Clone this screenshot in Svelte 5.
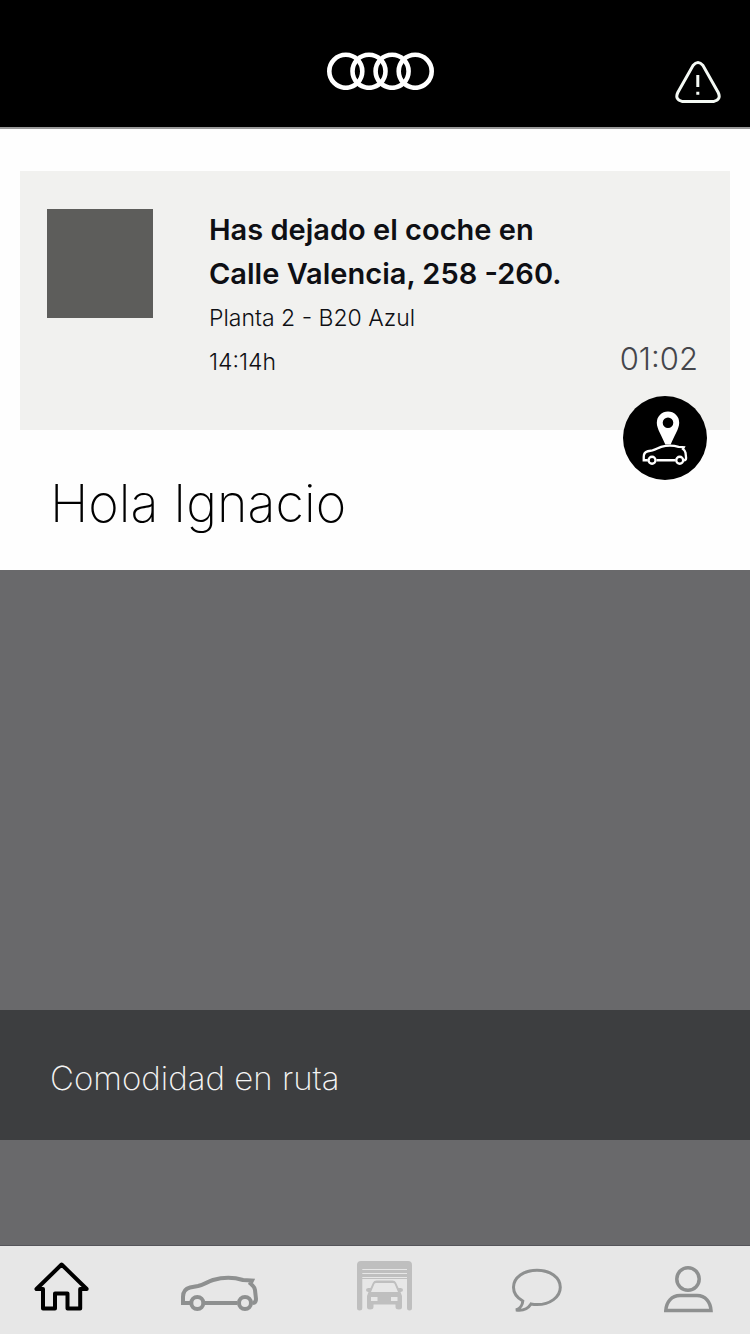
<script lang="ts">
	interface Tab {
		id: string;
		label: string;
		width: number;
		height: number;
	}

	const tabs: Tab[] = [
		{ id: 'home', label: 'Inicio', width: 56, height: 52 },
		{ id: 'car', label: 'Coche', width: 78, height: 38 },
		{ id: 'garage', label: 'Garaje', width: 56, height: 52 },
		{ id: 'chat', label: 'Mensajes', width: 52, height: 45 },
		{ id: 'profile', label: 'Perfil', width: 50, height: 47 }
	];

	let active = $state('home');
</script>

{#snippet car()}
	<path
		d="M10 28H3V22C3 16.500 6 13.500 10 12.500L18 11C24 9.500 27 7 33 5C44 1.800 54 2.200 63 5L72 5.500L70.500 8.500C73 10.500 74.500 12 75 15L76 24C76 26.500 75 28 72.500 28M25 28H57.500"
	/>
	<circle cx="17.300" cy="28" r="6" />
	<circle cx="65" cy="28" r="6" />
{/snippet}

<div class="screen">
	<header>
		<svg class="rings" width="107" height="38" viewBox="0 0 107 38" role="img" aria-label="Audi">
			{#each [18.8, 42, 65.1, 88.2] as cx}
				<circle {cx} cy="19.300" r="16.500" />
			{/each}
		</svg>
		<button class="alert" aria-label="Avisos">
			<svg width="46" height="42" viewBox="0 0 46 42">
				<path
					d="M18 4.500Q23 -1.500 28 4.500L43.200 31.500Q46.500 38.500 39 40.400H7Q-0.500 38.500 2.800 31.500Z"
				/>
				<path d="M22.800 14V26M22.800 30.700V33.700" />
			</svg>
		</button>
	</header>

	<main>
		<section class="card">
			<div class="thumb"></div>
			<div class="info">
				<h2>Has dejado el coche en<br />Calle Valencia, 258 -260.</h2>
				<p class="place">Planta 2 - B20 Azul</p>
				<div class="times">
					<span>14:14h</span>
					<span class="elapsed">01:02</span>
				</div>
			</div>
			<button class="locate" aria-label="Localizar el coche">
				<svg width="84" height="84" viewBox="0 0 84 84">
					<path
						class="pin"
						fill-rule="evenodd"
						d="M45 15.500A11.200 11.200 0 0 0 33.800 26.700C33.800 33 39 40 42.300 48.500H47.700C51 40 56.200 33 56.200 26.700A11.200 11.200 0 0 0 45 15.500ZM45 21.400A5.300 5.300 0 1 1 45 32A5.300 5.300 0 1 1 45 21.400Z"
					/>
					<g transform="translate(19 48) scale(0.580)">{@render car()}</g>
				</svg>
			</button>
		</section>

		<h1>Hola Ignacio</h1>

		<section class="hero"></section>
		<a class="band" href="#comodidad">Comodidad en ruta</a>
		<section class="preview"></section>
	</main>

	<nav>
		{#each tabs as tab}
			<button
				class={['tab', tab.id, active === tab.id && 'active']}
				aria-label={tab.label}
				onclick={() => (active = tab.id)}
			>
				<svg width={tab.width} height={tab.height} viewBox="0 0 {tab.width} {tab.height}">
					{#if tab.id === 'home'}
						<path
							d="M27.600 3.500L2.500 28H9V47.500H21V32.500H33.500V47.500H46.200V28H52.700Z"
						/>
					{:else if tab.id === 'car'}
						{@render car()}
					{:else if tab.id === 'garage'}
						<path
							class="solid"
							d="M1 4Q1 0 5 0H52Q56 0 56 4V47Q56 49.500 53.500 49.500Q51 49.500 51 47V18H6.300V47Q6.300 49.500 3.600 49.500Q1 49.500 1 47Z"
						/>
						<path class="slat" d="M6.300 8.500H51M6.300 12.500H51M6.300 16.500H51" />
						<path
							class="solid"
							fill-rule="evenodd"
							d="M14.500 27L17 21.500Q18 19.500 20.500 19.500H36.500Q39 19.500 40 21.500L42.500 27H44.500Q47 27 47 29Q47 31 44.500 31L46 35V46Q46 48.500 43 48.500Q39.500 48.500 39.500 46V43.500H17.500V46Q17.500 48.500 14 48.500Q11 48.500 11 46V35L12.500 31Q10 31 10 29Q10 27 12.500 27ZM15 31H42L38.500 22.800Q38 22 37 22H20Q19 22 18.500 22.800ZM15 36V40H21.500V36ZM35 36V40H41.500V36Z"
						/>
					{:else if tab.id === 'chat'}
						<path
							d="M11.800 33C5.500 29.500 2.500 25 2.500 19.300C2.500 9.500 13 2.200 26 2.200S49.300 9.500 49.300 19.300S39 36.600 26 36.600Q23 36.600 20 36C16.500 41.500 12 43 5 42C9 40.500 11.500 37.500 11.800 33Z"
						/>
					{:else}
						<circle cx="24" cy="13" r="11.200" />
						<path d="M1.800 44.500H47C46.500 36 41.500 29.500 33 29.500H16C7.500 29.500 2.300 36 1.800 44.500Z" />
					{/if}
				</svg>
			</button>
		{/each}
	</nav>
</div>

<style>
	:global(body) {
		margin: 0;
		background: #fefefe;
	}

	.screen {
		display: flex;
		flex-direction: column;
		min-height: 100vh;
		font-family: Inter, Roboto, sans-serif;
		color: #0e0f14;
	}

	button {
		padding: 0;
		border: none;
		background: none;
		cursor: pointer;
	}

	svg {
		display: block;
		fill: none;
		stroke: currentColor;
	}

	header {
		display: grid;
		grid-template-columns: 1fr auto 1fr;
		align-items: end;
		height: 127px;
		padding: 0 29px 0 40px;
		box-sizing: border-box;
		background: #000;
		color: #fff;
		box-shadow: 0 2px 0 #9a9a9a;
	}

	.rings {
		grid-column: 2;
		margin-bottom: 37px;
		stroke-width: 4.6;
	}

	.alert {
		justify-self: end;
		margin-bottom: 24px;
		color: #f5faf5;
		stroke-width: 3;
	}

	main {
		flex: 1;
		display: flex;
		flex-direction: column;
	}

	.card {
		position: relative;
		display: flex;
		gap: 56px;
		min-height: 259px;
		margin: 44px 20px 0;
		padding: 37px 32px 40px 27px;
		box-sizing: border-box;
		background: #f1f1ef;
	}

	.thumb {
		flex-shrink: 0;
		width: 106px;
		height: 109px;
		margin-top: 1px;
		background: #5d5d5b;
	}

	.info {
		flex: 1;
		white-space: nowrap;
	}

	h2,
	p {
		margin: 0;
		line-height: 44px;
	}

	h2 {
		font-size: 29px;
		font-weight: 600;
	}

	.place {
		font-size: 23px;
		font-weight: 300;
	}

	.times {
		display: flex;
		justify-content: space-between;
		align-items: baseline;
		font-size: 23px;
		font-weight: 300;
		line-height: 44px;
	}

	.elapsed {
		font-size: 31px;
		line-height: 36px;
		color: #45464b;
	}

	.locate {
		position: absolute;
		right: 23px;
		bottom: -50px;
		border-radius: 50%;
		background: #000;
		color: #fff;
		stroke-width: 4;
	}

	.pin {
		fill: currentColor;
		stroke: none;
	}

	h1 {
		margin: 0;
		padding: 44px 50px 36px;
		font-size: 52px;
		font-weight: 200;
		line-height: 60px;
		color: #000;
	}

	.hero {
		flex: 1;
		min-height: 200px;
		background: #69696b;
	}

	.band {
		padding: 46px 50px 40px;
		background: #3d3e40;
		color: #f4f4f4;
		font-size: 33px;
		font-weight: 200;
		line-height: 44px;
		text-decoration: none;
	}

	.preview {
		height: 105px;
		background: #69696b;
	}

	nav {
		display: grid;
		grid-template-columns: 146fr 176fr 155fr 153fr 86fr;
		align-items: end;
		justify-items: start;
		height: 89px;
		padding: 0 0 21px 34px;
		box-sizing: border-box;
		border-top: 1px solid #55555a;
		background: #e7e7e7;
	}

	.tab {
		color: #8e9090;
		stroke-width: 3.5;
	}

	.tab.active {
		color: #000;
		stroke-width: 4;
		stroke-linejoin: round;
	}

	.tab.car {
		stroke-width: 4;
	}

	.tab.garage {
		color: #bfbfbf;
	}

	.tab.chat {
		stroke-width: 3;
	}

	.solid {
		fill: currentColor;
		stroke: none;
	}

	.slat {
		stroke: #e7e7e7;
		stroke-width: 1;
	}
</style>
